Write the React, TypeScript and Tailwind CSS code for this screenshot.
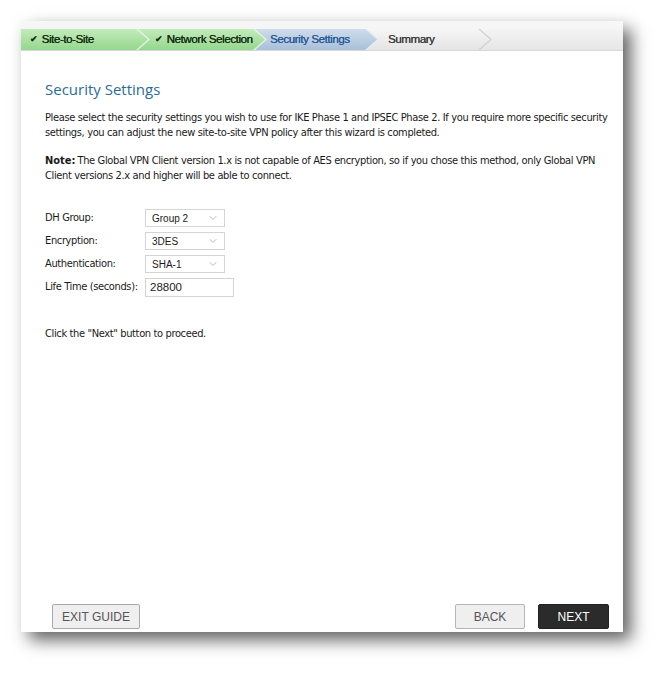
import React from 'react';
import { ChevronDown } from 'lucide-react';

type Step = {
  label: string;
  done?: boolean;
  state: 'done' | 'active' | 'todo';
  width: string;
  pad: string;
};

const steps: Step[] = [
  { label: 'Site-to-Site', state: 'done', done: true, width: 'w-[127px]', pad: 'pl-[9px]' },
  { label: 'Network Selection', state: 'done', done: true, width: 'w-[129px]', pad: 'pl-[19px]' },
  { label: 'Security Settings', state: 'active', width: 'w-[124px]', pad: 'pl-[17px]' },
  { label: 'Summary', state: 'todo', width: 'w-[125px]', pad: 'pl-[23px]' },
];

const arrow = '[clip-path:polygon(0_0,calc(100%-12px)_0,100%_50%,calc(100%-12px)_100%,0_100%)]';

const StepTab: React.FC<{ step: Step; index: number }> = ({ step, index }) => {
  const fill =
    step.state === 'done'
      ? 'bg-gradient-to-b from-[#c3ebbb] to-[#94d78d]'
      : step.state === 'active'
        ? 'bg-gradient-to-b from-[#cfdceb] to-[#a9c0d9]'
        : 'bg-gradient-to-b from-[#f6f6f6] to-[#e4e4e4]';
  const edge = step.state === 'todo' ? 'bg-[#d2d2d2]' : step.state === 'active' ? 'bg-[#e4ecf4]' : 'bg-[#e2f5de]';
  const text =
    step.state === 'done' ? 'text-[#132e12]' : step.state === 'active' ? 'text-[#2a5a9a]' : 'text-[#3c3c3c]';
  const zIndex = ['z-40', 'z-30', 'z-20', 'z-10'][index];

  return (
    <div className={`relative h-full shrink-0 ${step.width} ${zIndex} ${index > 0 ? '-ml-[12px]' : ''}`}>
      {/* light chevron line on the right edge */}
      <div className={`absolute inset-y-0 left-0 right-[-2px] ${edge} ${arrow}`} />
      <div
        className={`absolute inset-0 ${fill} ${arrow} flex items-center ${step.pad} ${text} text-[11.5px] tracking-[-0.4px] [text-shadow:0.3px_0_0_currentColor]`}
        style={{ fontFamily: '"Liberation Sans", Arial, sans-serif' }}
      >
        {step.done && <span className="mr-[4px] text-[9px]">✔</span>}
        {step.label}
      </div>
    </div>
  );
};

const SelectBox: React.FC<{ value: string }> = ({ value }) => (
  <div className="flex h-[18px] w-[80px] items-center justify-between border border-[#d4d4d4] bg-white pl-[6px] pr-[5px]">
    <span className="text-[10px] tracking-normal text-[#1a1a1a]" style={{ fontFamily: '"Liberation Sans", Arial, sans-serif' }}>
      {value}
    </span>
    <ChevronDown size={12} strokeWidth={1.2} color="#8a8a8a" />
  </div>
);

const rows: { label: string; value: string; input?: boolean }[] = [
  { label: 'DH Group:', value: 'Group 2' },
  { label: 'Encryption:', value: '3DES' },
  { label: 'Authentication:', value: 'SHA-1' },
  { label: 'Life Time (seconds):', value: '28800', input: true },
];

export default function App() {
  const body = { fontFamily: '"DejaVu Sans Condensed", "Liberation Sans", Arial, sans-serif' };

  return (
    <div className="h-[675px] w-[665px] bg-white pl-[21px] pt-[21px]">
      <div className="flex h-[611px] w-[602px] flex-col bg-white shadow-[8px_8px_16px_rgba(0,0,0,0.62)]">
        {/* wizard steps */}
        <div className="bg-gradient-to-b from-[#f7f7f7] to-[#efefef] pt-[8px]">
          <div className="flex h-[22px] border-b border-[#d8d8d8] bg-gradient-to-b from-[#f4f4f4] to-[#e6e6e6]">
            {steps.map((s, i) => (
              <StepTab key={s.label} step={s} index={i} />
            ))}
          </div>
        </div>

        <div
          className="flex flex-1 flex-col pl-[24px] pr-[8px] pt-[28px] text-[11px] tracking-[-0.36px] text-[#1a1a1a]"
          style={body}
        >
          <h1
            className="text-[15px] leading-[20px] tracking-normal text-[#2d6c99]"
            style={{ fontFamily: '"Open Sans", sans-serif' }}
          >
            Security Settings
          </h1>

          <p className="mt-[12px] leading-[14.5px]">
            Please select the security settings you wish to use for IKE Phase 1 and IPSEC Phase 2. If you require more
            specific security settings, you can adjust the new site-to-site VPN policy after this wizard is completed.
          </p>

          <p className="mt-[14px] leading-[14.5px]">
            <b className="mr-[2px] tracking-normal">Note:</b>The Global VPN Client version 1.x is not capable of AES
            encryption, so if you chose this method, only Global VPN Client versions 2.x and higher will be able to
            connect.
          </p>

          <div className="mt-[26px] flex flex-col gap-[5px]">
            {rows.map((r) => (
              <div key={r.label} className="flex items-center">
                <span className="w-[100px]">{r.label}</span>
                {r.input ? (
                  <div
                    className="flex h-[19px] w-[89px] items-center border border-[#d4d4d4] bg-white pl-[4px] text-[11.5px] tracking-normal text-[#222]"
                    style={{ fontFamily: '"Liberation Sans", Arial, sans-serif' }}
                  >
                    {r.value}
                  </div>
                ) : (
                  <SelectBox value={r.value} />
                )}
              </div>
            ))}
          </div>

          <p className="mt-[29px]">Click the "Next" button to proceed.</p>

          <div
            className="mt-auto flex items-center justify-between pb-[3px] pl-[7px] pr-[6px] text-[12px] tracking-normal"
            style={{ fontFamily: '"Liberation Sans", Arial, sans-serif' }}
          >
            <button className="h-[25px] w-[88px] rounded-[2px] border border-[#a9a9a9] bg-[#efefef] text-[#555]">
              EXIT GUIDE
            </button>
            <div className="flex gap-[13px]">
              <button className="h-[25px] w-[70px] rounded-[2px] border border-[#b5b5b5] bg-[#efefef] text-[#555]">
                BACK
              </button>
              <button className="h-[25px] w-[71px] rounded-[2px] border border-[#222] bg-[#2b2b2b] text-white">
                NEXT
              </button>
            </div>
          </div>
        </div>
      </div>
    </div>
  );
}
